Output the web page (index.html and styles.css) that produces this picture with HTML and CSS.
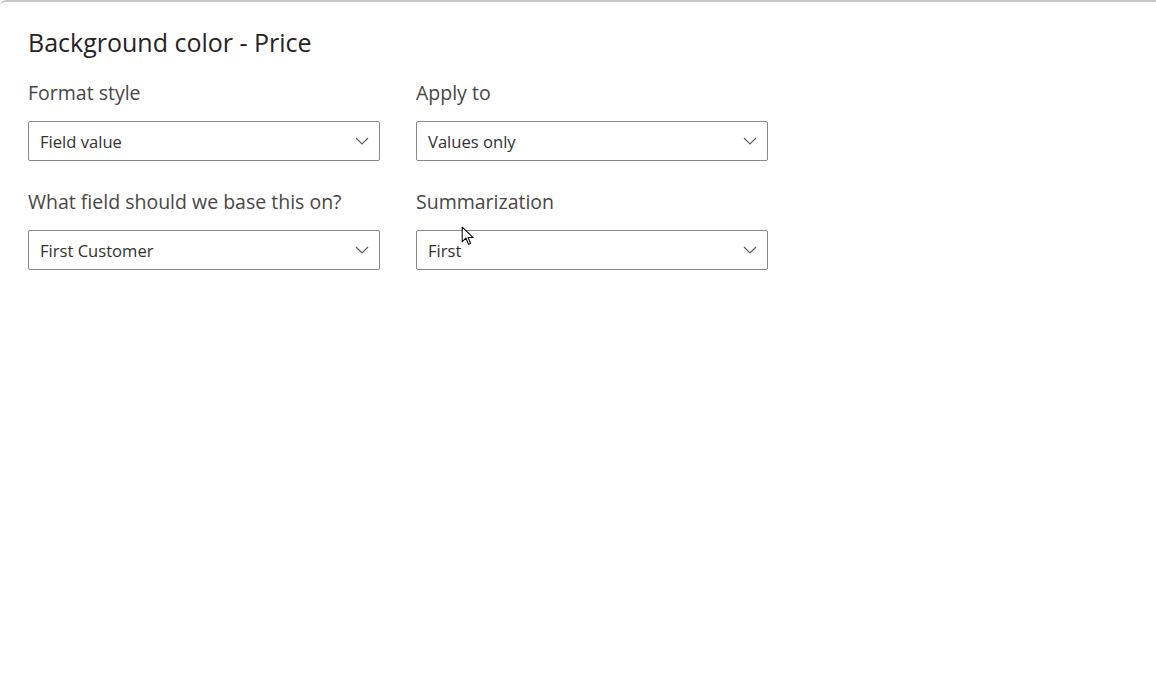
FILE: index.html
```html
<!DOCTYPE html>
<html>
<head>
<meta charset="utf-8">
<link rel="stylesheet" href="styles.css">
</head>
<body>
<div class="panel">
  <h1 class="title">Background color - Price</h1>
  <div class="grid">
    <div class="field">
      <div class="label">Format style</div>
      <div class="select"><span class="value">Field value</span><svg class="chev" width="14" height="8" viewBox="0 0 14 8"><path d="M1 1 L7 7 L13 1" fill="none" stroke="#605e5c" stroke-width="1.2"/></svg></div>
    </div>
    <div class="field">
      <div class="label">Apply to</div>
      <div class="select"><span class="value">Values only</span><svg class="chev" width="14" height="8" viewBox="0 0 14 8"><path d="M1 1 L7 7 L13 1" fill="none" stroke="#605e5c" stroke-width="1.2"/></svg></div>
    </div>
    <div class="field">
      <div class="label">What field should we base this on?</div>
      <div class="select"><span class="value">First Customer</span><svg class="chev" width="14" height="8" viewBox="0 0 14 8"><path d="M1 1 L7 7 L13 1" fill="none" stroke="#605e5c" stroke-width="1.2"/></svg></div>
    </div>
    <div class="field">
      <div class="label">Summarization</div>
      <div class="select"><span class="value">First</span><svg class="chev" width="14" height="8" viewBox="0 0 14 8"><path d="M1 1 L7 7 L13 1" fill="none" stroke="#605e5c" stroke-width="1.2"/></svg></div>
    </div>
  </div>
  <svg class="cursor" width="15" height="21" viewBox="0 0 14 20"><path d="M1 1 L1 15 L4.5 11.5 L7 17.5 L9 16.6 L6.6 11 L11.5 11 Z" fill="#fff" stroke="#000" stroke-width="1" stroke-linejoin="round"/></svg>
</div>
</body>
</html>
```
FILE: styles.css
```css
html, body {
  margin: 0;
  padding: 0;
  background: #ffffff;
}
body {
  width: 1156px;
  height: 696px;
  overflow: hidden;
  font-family: "Open Sans", "Noto Sans", sans-serif;
  color: #323130;
}
.panel {
  position: relative;
  height: 694px;
  border-top: 2px solid #c8c6c4;
  border-top-left-radius: 6px;
  padding: 0 0 0 28px;
}
.title {
  margin: 0;
  padding-top: 25px;
  font-size: 25px;
  line-height: 30px;
  font-weight: 500;
  color: #252423;
}
.grid {
  display: grid;
  grid-template-columns: 352px 352px;
  column-gap: 36px;
  row-gap: 28px;
  margin-top: 23px;
}
.label {
  font-size: 19.5px;
  line-height: 26px;
  color: #484644;
  margin-bottom: 15px;
}
.select {
  box-sizing: border-box;
  height: 40px;
  border: 1px solid #8a8886;
  border-radius: 2px;
  display: flex;
  align-items: center;
  justify-content: space-between;
  padding: 0 10px 0 11px;
}
.value {
  font-size: 16.6px;
  color: #323130;
}
.chev {
  display: block;
}
.cursor {
  position: absolute;
  left: 461px;
  top: 224px;
}
```
